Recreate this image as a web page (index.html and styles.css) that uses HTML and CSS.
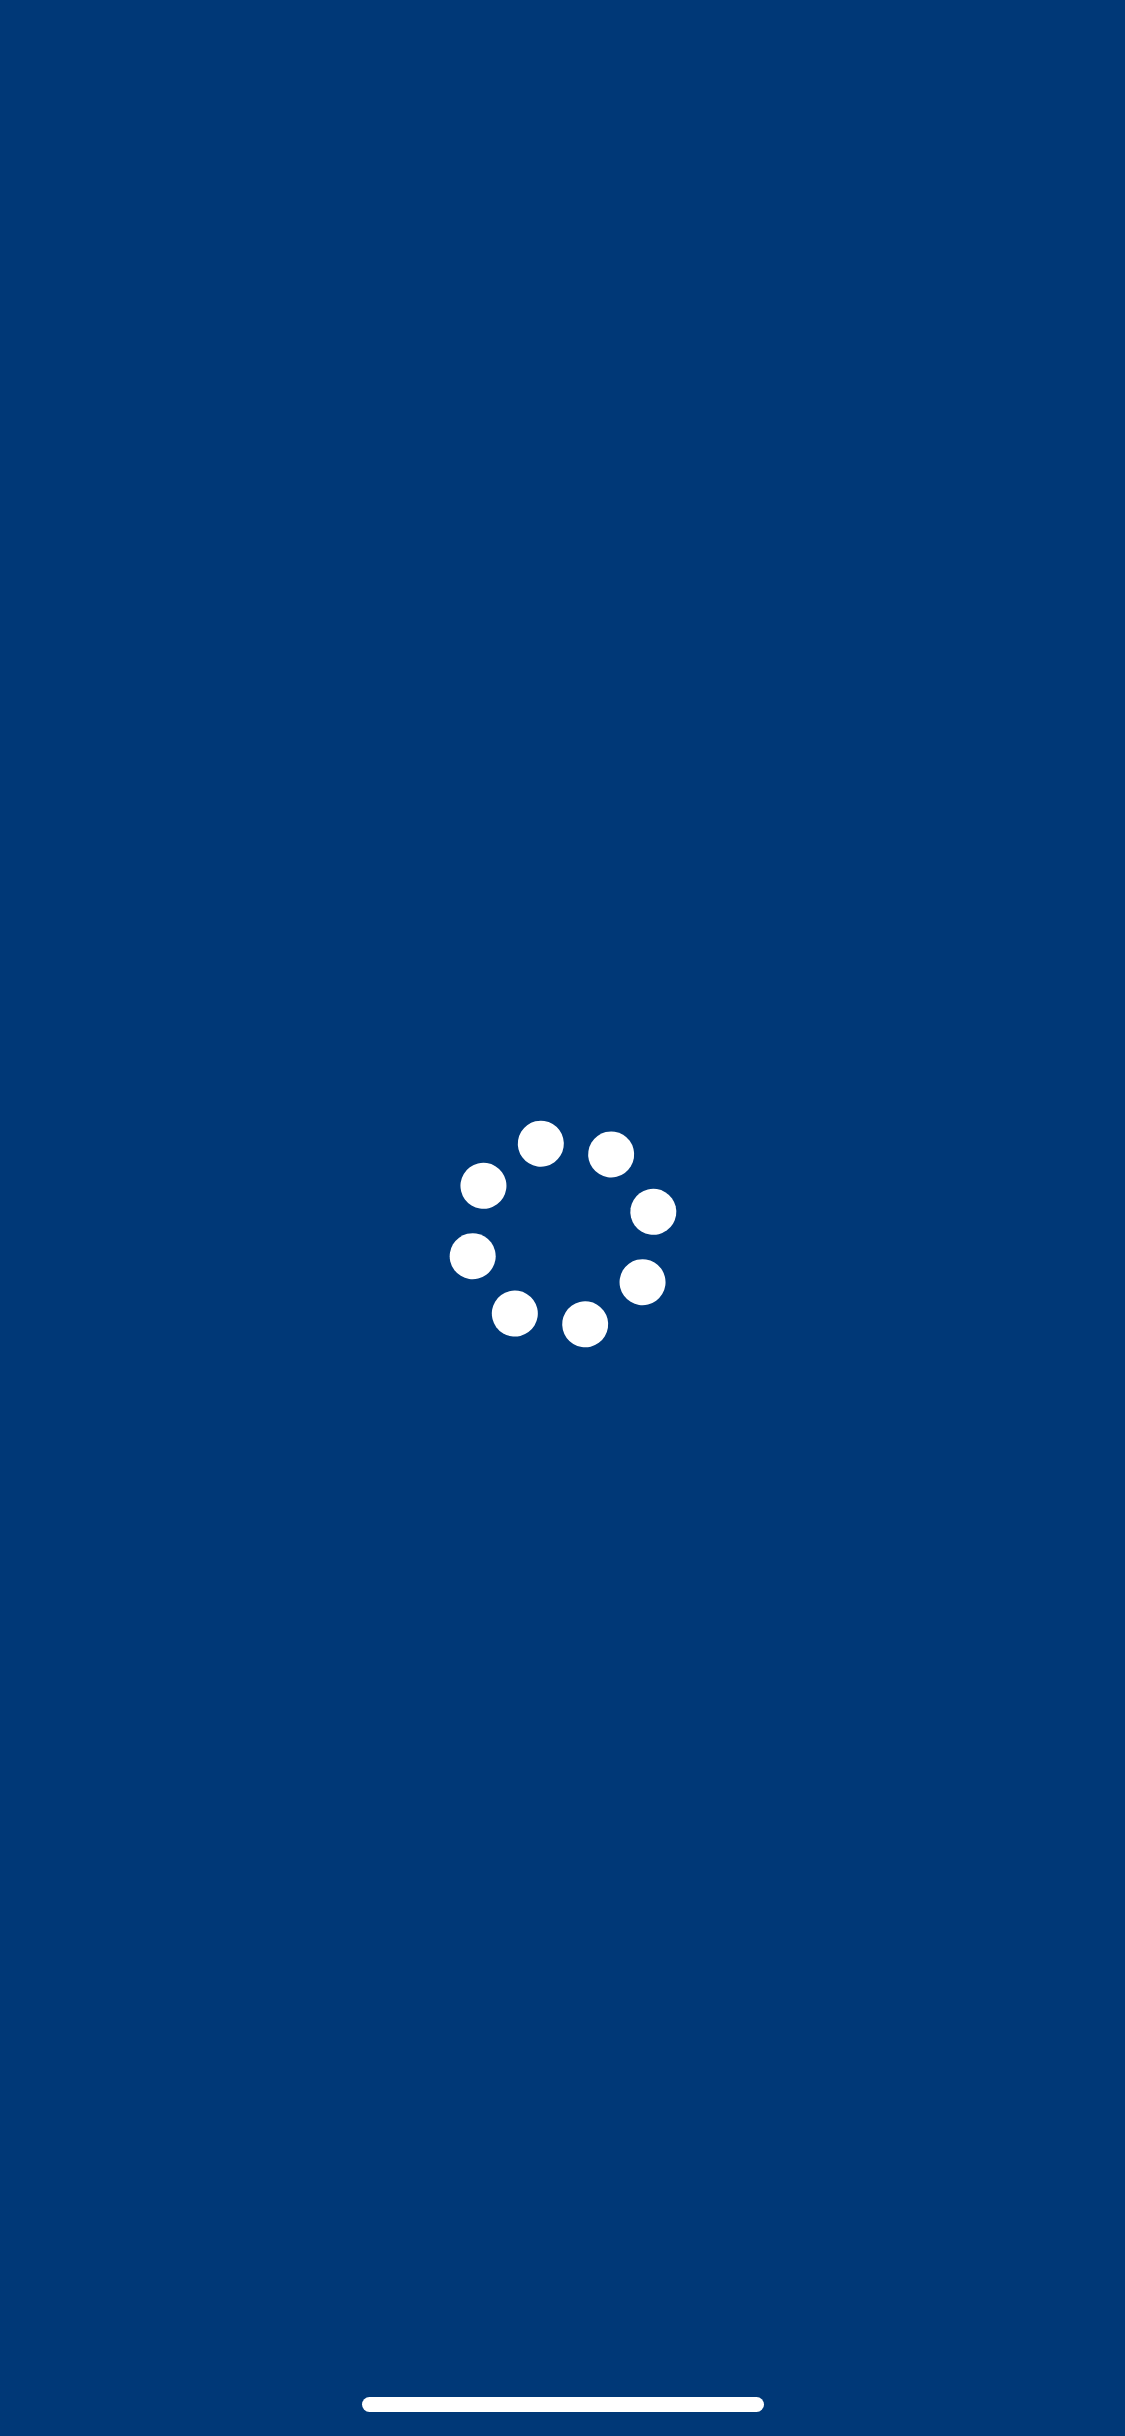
FILE: index.html
```html
<!DOCTYPE html>
<html lang="en">
<head>
<meta charset="utf-8">
<title>Loading</title>
<link rel="stylesheet" href="styles.css">
</head>
<body>
<div class="screen">
  <main class="content">
    <div class="spinner" role="progressbar" aria-label="Loading">
      <span class="dot"></span>
      <span class="dot"></span>
      <span class="dot"></span>
      <span class="dot"></span>
      <span class="dot"></span>
      <span class="dot"></span>
      <span class="dot"></span>
      <span class="dot"></span>
    </div>
  </main>
  <div class="home-area"><div class="home-indicator"></div></div>
</div>
</body>
</html>
```
FILE: styles.css
```css
html, body {
  margin: 0;
  padding: 0;
  background: #003877;
  font-family: "Liberation Sans", Arial, sans-serif;
}
.screen {
  width: 1125px;
  height: 2436px;
  display: flex;
  flex-direction: column;
  background: #003877;
  overflow: hidden;
}
.content {
  flex: 1;
  display: flex;
  align-items: center;
  justify-content: center;
  padding-top: 70px;
}
.spinner {
  position: relative;
  width: 232px;
  height: 232px;
}
.dot {
  position: absolute;
  left: 50%;
  top: 50%;
  width: 46px;
  height: 46px;
  margin: -23px 0 0 -23px;
  border-radius: 50%;
  background: #ffffff;
}
.dot:nth-child(1) { transform: rotate(-103.8deg) translateX(93px); }
.dot:nth-child(2) { transform: rotate(-58.8deg) translateX(93px); }
.dot:nth-child(3) { transform: rotate(-13.8deg) translateX(93px); }
.dot:nth-child(4) { transform: rotate(31.2deg) translateX(93px); }
.dot:nth-child(5) { transform: rotate(76.2deg) translateX(93px); }
.dot:nth-child(6) { transform: rotate(121.2deg) translateX(93px); }
.dot:nth-child(7) { transform: rotate(166.2deg) translateX(93px); }
.dot:nth-child(8) { transform: rotate(211.2deg) translateX(93px); }
.home-area {
  height: 39px;
  display: flex;
  justify-content: center;
}
.home-indicator {
  width: 402px;
  height: 15px;
  border-radius: 8px;
  background: #ffffff;
}
```
